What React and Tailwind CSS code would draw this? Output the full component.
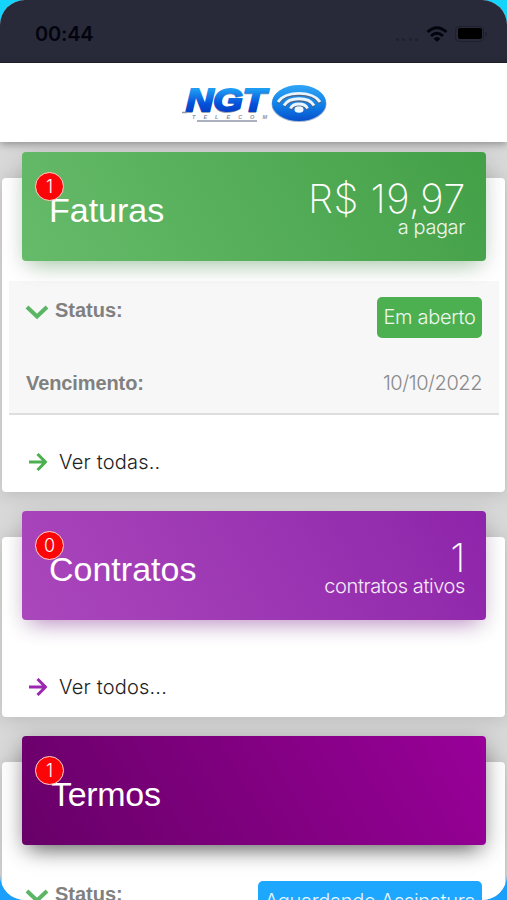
import clsx from "clsx";

const ChevronDown = () => (
  <svg viewBox="0 0 24 16" fill="none" stroke="#5ab565" strokeWidth="4" className="mt-[6px] w-6 h-4 shrink-0">
    <path d="M2 3l10 9.500L22 3" />
  </svg>
);

const ArrowRight = ({ className }) => (
  <svg viewBox="0 0 20 18" fill="none" stroke="currentColor" strokeWidth="3" className={clsx("w-5 h-[18px] shrink-0", className)}>
    <path d="M1 9h16M9.500 1l8 8-8 8" strokeLinejoin="round" />
  </svg>
);

const Logo = () => (
  <svg viewBox="0 0 150 44" className="w-[150px] h-11">
    <defs>
      <linearGradient id="ngt" x1="0" y1="0" x2="0" y2="1">
        <stop offset="0.200" stopColor="#1e9cf2" />
        <stop offset="0.600" stopColor="#0552dc" />
        <stop offset="1" stopColor="#0434b4" />
      </linearGradient>
      <linearGradient id="disc" x1="0" y1="0" x2="0" y2="1">
        <stop offset="0" stopColor="#30a5f5" />
        <stop offset="0.550" stopColor="#1080e8" />
        <stop offset="1" stopColor="#0750cc" />
      </linearGradient>
    </defs>
    <g fontFamily="Liberation Sans, Arial, sans-serif" fontWeight="bold" fontStyle="italic">
      <text x="7" y="32.500" fontSize="31" textLength="80" lengthAdjust="spacingAndGlyphs" fill="#8b95ab" stroke="#8b95ab" strokeWidth="1.500">NGT</text>
      <text x="7" y="31.500" fontSize="31" textLength="80" lengthAdjust="spacingAndGlyphs" fill="url(#ngt)" stroke="url(#ngt)" strokeWidth="2">NGT</text>
      <text x="13" y="40" fontSize="5.500" textLength="75" fill="#8d93a5">TELECOM</text>
    </g>
    <path d="M3 33.500h5M18 42h60" stroke="#9298ab" strokeWidth="1.300" />
    <ellipse cx="120" cy="25" rx="27.500" ry="18" fill="#a5b5cf" />
    <ellipse cx="120" cy="24" rx="27" ry="18" fill="url(#disc)" />
    <g fill="none" stroke="#50627f" strokeWidth="2.800" transform="translate(0 1.300)">
      <path d="M99 23C106 11.500 134 11.500 141 23M105 26.500C110 17.500 130 17.500 135 26.500M111.500 29.500C114 23.500 126 23.500 128.500 29.500" />
    </g>
    <g fill="none" stroke="#e9f5ff" strokeWidth="2.800">
      <path d="M99 23C106 11.500 134 11.500 141 23M105 26.500C110 17.500 130 17.500 135 26.500M111.500 29.500C114 23.500 126 23.500 128.500 29.500" />
    </g>
    <ellipse cx="120" cy="30.500" rx="4.500" ry="3.300" fill="#f0f8ff" />
  </svg>
);

const StatusBar = () => (
  <div className="flex h-[63px] shrink-0 items-center justify-between border-b border-[#20202c] bg-[#282a3a] pl-[35px] pr-5 pt-[5px]">
    <span className="font-[Inter,sans-serif] text-[20px] font-semibold tracking-[-0.2px] text-[#03040d]">00:44</span>
    <div className="flex items-center">
      <div className="mr-2 mt-3 flex gap-[3.5px]">
        <i className="size-[3px] rounded-full bg-[#1f2130]" />
        <i className="size-[3px] rounded-full bg-[#1f2130]" />
        <i className="size-[3px] rounded-full bg-[#1f2130]" />
        <i className="size-[3px] rounded-full bg-[#1f2130]" />
      </div>
      <svg viewBox="0 0 22 16" className="h-4 w-[22px]" fill="none" stroke="#03040d" strokeWidth="3">
        <path d="M1.500 6q9.500-8.500 19 0M5 10q6-5.500 12 0" />
        <path d="M7.500 12.500q3.500-3 7 0L11 16z" fill="#03040d" stroke="none" />
      </svg>
      <div className="ml-[7px] flex items-center">
        <div className="rounded-[4px] border border-[#1f202d] p-[1.5px]">
          <div className="h-[11px] w-6 rounded-[2px] bg-black" />
        </div>
        <i className="ml-px h-1 w-0.5 rounded-r bg-[#1f202d]" />
      </div>
    </div>
  </div>
);

const Banner = ({ title, count, value, label, className, titleClass }) => (
  <div className={clsx("relative -mt-[26px] ml-5 mr-[19px] flex h-[109px] justify-between rounded-[4px] pr-[21px] text-white", className)}>
    <h2 className={clsx("pt-[38px] text-[34px] leading-[40px]", titleClass)}>{title}</h2>
    <span className="absolute left-[13px] top-5 flex size-[29px] items-center justify-center rounded-full border-[1.5px] border-[#ffd6cc] bg-[#fb0509] font-[Inter,sans-serif] text-[18px] font-light">
      {count}
    </span>
    {value && (
      <div className="flex flex-col items-end pt-[23px] font-[Inter,sans-serif] font-light">
        <span className="-mr-px text-[40px] font-[250] leading-[48px] tracking-[0.5px]">{value}</span>
        <span className="-mt-[8px] text-[20px] leading-6 tracking-[-0.4px] opacity-90">{label}</span>
      </div>
    )}
  </div>
);

const Card = ({ className, children }) => (
  <section className={clsx("mx-[2px] shrink-0 rounded-[4px] bg-white shadow-[0_2px_18px_rgba(0,0,0,0.14)]", className)}>
    {children}
  </section>
);

const StatusRow = ({ children, className }) => (
  <div className="flex items-start justify-between">
    <div className="flex items-start gap-[6px] pt-px">
      <ChevronDown />
      <span className="text-[20px] font-bold leading-6 text-[#808080]">Status:</span>
    </div>
    <span className={clsx("h-[41px] rounded-[5px] font-[Inter,sans-serif] text-[20px] font-light leading-[41px] tracking-[-0.3px] text-white/90", className)}>
      {children}
    </span>
  </div>
);

const SeeAll = ({ color, children }) => (
  <a className="flex items-center gap-[11px] pl-[26px]">
    <ArrowRight className={color} />
    <span className="font-[Inter,sans-serif] text-[20px] font-light leading-6 tracking-[0.2px] text-[#222]">{children}</span>
  </a>
);

export default function App() {
  return (
    <div className="h-[900px] w-[507px] overflow-hidden bg-linear-to-b from-[#14d4fb] from-50% to-[#1a9ffc] to-50% font-['Liberation_Sans',Arial,sans-serif]">
      <div className="flex h-full flex-col overflow-hidden rounded-[25px] bg-[#d8d8d8]">
        <StatusBar />
        <header className="relative flex h-[79px] shrink-0 justify-center bg-white pt-4 shadow-[0_2px_8px_rgba(0,0,0,0.35)]">
          <Logo />
        </header>

        <Card className="mt-9 h-[314px]">
          <Banner
            title="Faturas"
            count="1"
            value="R$ 19,97"
            label="a pagar"
            titleClass="pl-[27px]"
            className="bg-linear-60 from-[#66bb6a] to-[#43a047] shadow-[0_12px_20px_-10px_rgba(76,175,80,0.4),0_5px_22px_rgba(0,0,0,0.14)]"
          />
          <div className="ml-[7px] mr-[6px] mt-5 h-[134px] border-b-2 border-[#dedede] bg-[#f7f7f7] pl-4 pr-[17px] pt-4">
            <StatusRow className="w-[105px] bg-[#4caf50] text-center">Em aberto</StatusRow>
            <div className="mt-[33px] flex items-center justify-between pl-px">
              <span className="text-[20px] font-bold leading-6 tracking-[-0.1px] text-[#808080]">Vencimento:</span>
              <span className="font-[Inter,sans-serif] text-[20px] font-light leading-6 tracking-[-0.45px] text-[#8a8a8a]">10/10/2022</span>
            </div>
          </div>
          <div className="pt-[35px]">
            <SeeAll color="text-[#4caf50]">Ver todas..</SeeAll>
          </div>
        </Card>

        <Card className="mt-[45px] h-[180px]">
          <Banner
            title="Contratos"
            count="0"
            value="1"
            label="contratos ativos"
            titleClass="pl-[27px]"
            className="bg-linear-60 from-[#ab47bc] to-[#8e24aa] shadow-[0_12px_20px_-10px_rgba(156,39,176,0.45),0_5px_22px_rgba(0,0,0,0.14)]"
          />
          <div className="pt-[55px]">
            <SeeAll color="text-[#9c27b0]">Ver todos...</SeeAll>
          </div>
        </Card>

        <Card className="mt-[45px] h-[300px]">
          <Banner
            title="Termos"
            count="1"
            titleClass="pl-[29px] tracking-[-0.3px]"
            className="bg-linear-60 from-[#680068] to-[#990099] shadow-[0_12px_20px_-10px_rgba(0,0,0,0.5),0_5px_22px_rgba(0,0,0,0.28)]"
          />
          <div className="ml-[7px] mr-[6px] mt-5 pl-4 pr-[17px] pt-4">
            <StatusRow className="w-[224px] bg-[#1da7ff] text-center">Aguardando Assinatura</StatusRow>
          </div>
        </Card>
      </div>
    </div>
  );
}
